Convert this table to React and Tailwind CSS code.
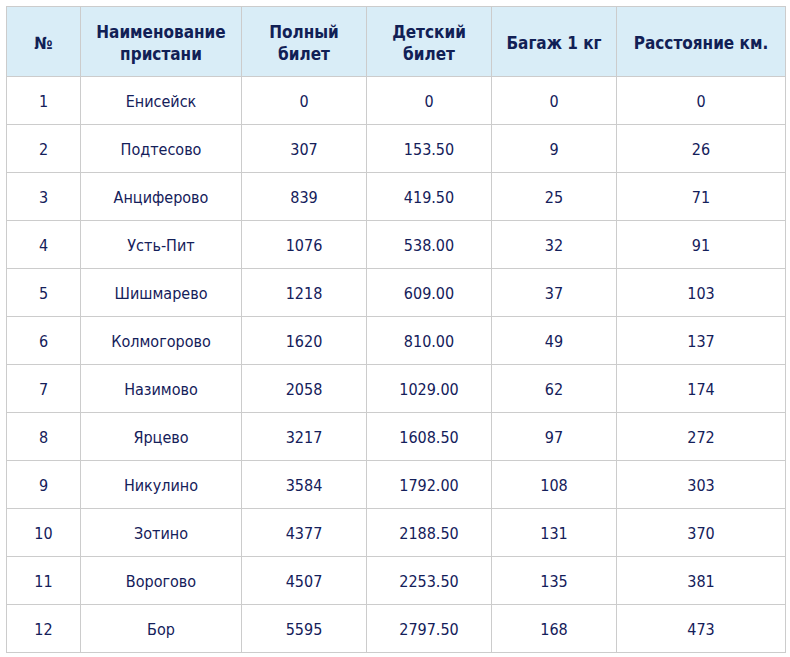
const rows = [
  ["1", "Енисейск", "0", "0", "0", "0"],
  ["2", "Подтесово", "307", "153.50", "9", "26"],
  ["3", "Анциферово", "839", "419.50", "25", "71"],
  ["4", "Усть-Пит", "1076", "538.00", "32", "91"],
  ["5", "Шишмарево", "1218", "609.00", "37", "103"],
  ["6", "Колмогорово", "1620", "810.00", "49", "137"],
  ["7", "Назимово", "2058", "1029.00", "62", "174"],
  ["8", "Ярцево", "3217", "1608.50", "97", "272"],
  ["9", "Никулино", "3584", "1792.00", "108", "303"],
  ["10", "Зотино", "4377", "2188.50", "131", "370"],
  ["11", "Ворогово", "4507", "2253.50", "135", "381"],
  ["12", "Бор", "5595", "2797.50", "168", "473"],
];

const headers = ["№", "Наименование пристани", "Полный билет", "Детский билет", "Багаж 1 кг", "Расстояние км."];

const App = () => {
  return (
    <div
      className="p-[6px] bg-white text-[#14205a]"
      style={{ fontFamily: '"DejaVu Sans Condensed", "DejaVu Sans", Tahoma, sans-serif' }}
    >
      <table className="table-fixed border-collapse w-[779px] text-center text-[16px]">
        <colgroup>
          <col className="w-[74px]" />
          <col className="w-[161px]" />
          <col className="w-[125px]" />
          <col className="w-[125px]" />
          <col className="w-[125px]" />
          <col className="w-[169px]" />
        </colgroup>
        <thead>
          <tr className="h-[70px] bg-[#d9edf7]">
            {headers.map((h) => (
              <th key={h} className="border border-[#cccccc] font-bold text-[17px] leading-[22px] px-1 pt-[2px] text-[#112055]">
                {h}
              </th>
            ))}
          </tr>
        </thead>
        <tbody>
          {rows.map((r) => (
            <tr key={r[0]} className="h-[48px]">
              {r.map((c, i) => (
                <td key={i} className="border border-[#cccccc] px-1 pt-[2px]">
                  {c}
                </td>
              ))}
            </tr>
          ))}
        </tbody>
      </table>
    </div>
  );
};

export default App;
